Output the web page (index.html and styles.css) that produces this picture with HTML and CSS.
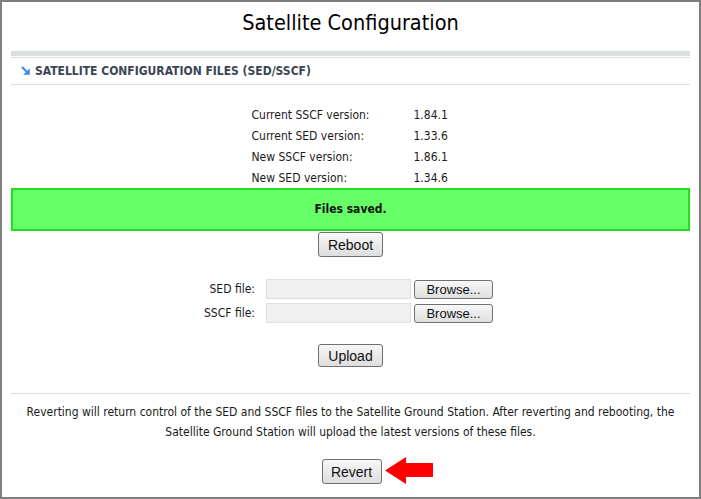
FILE: index.html
```html
<!DOCTYPE html>
<html lang="en">
<head>
    <meta charset="UTF-8">
    <title>Satellite Configuration</title>
    <link rel="stylesheet" href="styles.css">
</head>
<body>
<div class="frame">
    <h1 class="page-title">Satellite Configuration</h1>
    <div class="thick-rule"></div>

    <div class="section-head">
        <svg class="head-icon" width="9" height="9" viewBox="0 0 9 9">
            <path d="M1 1 L6.5 6.5" stroke="#3a8ee6" stroke-width="2.2" fill="none"/>
            <path d="M8.8 2.2 V8.8 H2.2 Z" fill="#3a8ee6"/>
        </svg>
        <span>SATELLITE CONFIGURATION FILES (SED/SSCF)</span>
    </div>

    <div class="versions">
        <span>Current SSCF version:</span><span>1.84.1</span>
        <span>Current SED version:</span><span>1.33.6</span>
        <span>New SSCF version:</span><span>1.86.1</span>
        <span>New SED version:</span><span>1.34.6</span>
    </div>

    <div class="notice">Files saved.</div>

    <div class="btn-row">
        <input type="button" class="btn reboot-btn" value="Reboot">
    </div>

    <div class="file-form">
        <label class="file-label">SED file:</label>
        <input type="text" class="file-path">
        <input type="button" class="btn browse-btn" value="Browse...">
        <label class="file-label">SSCF file:</label>
        <input type="text" class="file-path">
        <input type="button" class="btn browse-btn" value="Browse...">
    </div>

    <div class="btn-row upload-row">
        <input type="button" class="btn upload-btn" value="Upload">
    </div>

    <div class="revert-box">
        <p class="revert-text">Reverting will return control of the SED and SSCF files to the Satellite Ground Station. After reverting and rebooting, the Satellite Ground Station will upload the latest versions of these files.</p>
        <div class="btn-row revert-row">
            <div class="revert-wrap">
                <input type="button" class="btn revert-btn" value="Revert">
                <svg class="red-arrow" width="50" height="27" viewBox="0 0 50 27">
                    <polygon points="1,13.5 22,0 22,6 49,6 49,20 22,20 22,27" fill="#ff0000"/>
                </svg>
            </div>
        </div>
    </div>
</div>
</body>
</html>
```

FILE: styles.css
```css
body {
    margin: 0;
    font-family: Tahoma, "DejaVu Sans Condensed", "DejaVu Sans", sans-serif;
    font-size: 12px;
    color: #1a1a1a;
    background: #fff;
}

.frame {
    box-sizing: border-box;
    width: 701px;
    height: 499px;
    border: 2px solid #7f7f7f;
    padding: 0 9px;
}

.page-title {
    margin: 0;
    height: 49px;
    line-height: 42px;
    text-align: center;
    font-size: 21.5px;
    font-weight: normal;
    color: #000;
}

.thick-rule {
    height: 5px;
    background: #dcdfdf;
    margin-bottom: 1px;
}

.section-head {
    height: 26px;
    border-top: 1px solid #dcdcdc;
    border-bottom: 1px solid #dcdcdc;
    display: flex;
    align-items: center;
    padding-left: 10px;
    gap: 5px;
    font-weight: bold;
    color: #3b4654;
}

.head-icon {
    margin-top: -2px;
}

.versions {
    display: grid;
    grid-template-columns: 162px 36px;
    justify-content: center;
    grid-auto-rows: 21px;
    align-items: center;
    margin-top: 19px;
}

.notice {
    height: 39px;
    line-height: 39px;
    border: 2px solid #22dd22;
    background: #66ff66;
    text-align: center;
    font-weight: bold;
    color: #111;
}

.btn-row {
    display: flex;
    justify-content: center;
}

.btn {
    font-family: "Liberation Sans", Arial, sans-serif;
    font-size: 14px;
    color: #111;
    background: linear-gradient(#f7f7f7, #dedede);
    border: 1px solid #707070;
    border-radius: 3px;
    padding: 0;
}

.reboot-btn {
    margin-top: 1px;
    width: 65px;
    height: 25px;
}

.file-form {
    display: grid;
    grid-template-columns: 56px 156px 82px;
    grid-auto-rows: 20px;
    row-gap: 4px;
    justify-content: center;
    align-items: center;
    margin: 22px 9px 0 0;
}

.file-label {
    text-align: right;
}

.file-path {
    box-sizing: border-box;
    width: 145px;
    height: 20px;
    margin-left: 11px;
    background: #f0f0f0;
    border: 1px solid #e0e0e0;
}

.browse-btn {
    width: 79px;
    height: 19px;
    margin-left: 3px;
    font-size: 13px;
}

.upload-row {
    margin-top: 21px;
}

.upload-btn {
    width: 65px;
    height: 23px;
}

.revert-box {
    margin-top: 26px;
    border-top: 1px solid #dcdcdc;
}

.revert-text {
    margin: 8px 0 0;
    line-height: 20px;
    text-align: center;
}

.revert-row {
    margin-top: 17px;
}

.revert-wrap {
    position: relative;
    margin-left: 2px;
}

.revert-btn {
    width: 60px;
    height: 25px;
}

.red-arrow {
    position: absolute;
    left: 62px;
    top: -2px;
}
```
